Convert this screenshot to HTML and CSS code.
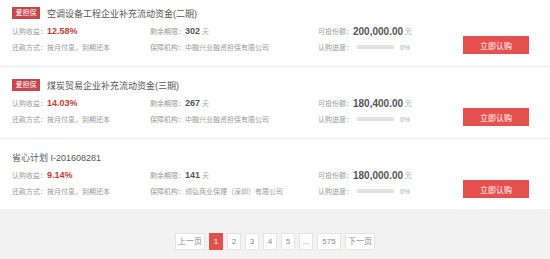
FILE: index.html
```html
<!DOCTYPE html>
<html lang="zh-CN">
<head>
    <meta charset="UTF-8">
    <title>项目列表</title>
    <link rel="stylesheet" href="styles.css">
</head>
<body>
    <div class="list">
        <div class="card">
            <div class="card-main">
                <div class="title-row">
                    <span class="tag">爱担保</span>
                    <span class="title">空调设备工程企业补充流动资金(二期)</span>
                </div>
                <div class="info">
                    <div class="cell">认购收益：<b class="rate">12.58%</b></div>
                    <div class="cell">剩余期限：<b class="num">302</b> <span class="unit">天</span></div>
                    <div class="cell">可投份额：<b class="num big">200,000.00</b> <span class="unit">元</span></div>
                    <div class="cell">还款方式：按月付息，到期还本</div>
                    <div class="cell">保障机构：中融兴业融资担保有限公司</div>
                    <div class="cell">认购进度：<span class="bar"></span><span class="pct">0%</span></div>
                </div>
            </div>
            <button class="buy">立即认购</button>
        </div>

        <div class="card">
            <div class="card-main">
                <div class="title-row">
                    <span class="tag">爱担保</span>
                    <span class="title">煤炭贸易企业补充流动资金(三期)</span>
                </div>
                <div class="info">
                    <div class="cell">认购收益：<b class="rate">14.03%</b></div>
                    <div class="cell">剩余期限：<b class="num">267</b> <span class="unit">天</span></div>
                    <div class="cell">可投份额：<b class="num big">180,400.00</b> <span class="unit">元</span></div>
                    <div class="cell">还款方式：按月付息，到期还本</div>
                    <div class="cell">保障机构：中融兴业融资担保有限公司</div>
                    <div class="cell">认购进度：<span class="bar"></span><span class="pct">0%</span></div>
                </div>
            </div>
            <button class="buy">立即认购</button>
        </div>

        <div class="card">
            <div class="card-main">
                <div class="title-row">
                    <span class="title">省心计划 I-201608281</span>
                </div>
                <div class="info">
                    <div class="cell">认购收益：<b class="rate">9.14%</b></div>
                    <div class="cell">剩余期限：<b class="num">141</b> <span class="unit">天</span></div>
                    <div class="cell">可投份额：<b class="num big">180,000.00</b> <span class="unit">元</span></div>
                    <div class="cell">还款方式：按月付息，到期还本</div>
                    <div class="cell">保障机构：领弘商业保理（深圳）有限公司</div>
                    <div class="cell">认购进度：<span class="bar"></span><span class="pct">0%</span></div>
                </div>
            </div>
            <button class="buy">立即认购</button>
        </div>
    </div>

    <div class="pager">
        <a class="page wide">上一页</a>
        <a class="page active">1</a>
        <a class="page">2</a>
        <a class="page">3</a>
        <a class="page">4</a>
        <a class="page">5</a>
        <a class="page">...</a>
        <a class="page mid">575</a>
        <a class="page wide">下一页</a>
    </div>
</body>
</html>
```

FILE: styles.css
```css
body {
    margin: 0;
    font-family: "Liberation Sans", "Noto Sans CJK SC", sans-serif;
    background: #f2f2f2;
    color: #888;
    font-size: 7px;
}
.list {
    margin-top: -4px;
    display: flex;
    flex-direction: column;
    gap: 3px;
    background: #f3f3f3;
}
.card {
    display: flex;
    height: 69px;
    box-sizing: border-box;
    padding: 11px 21px 0 12px;
    background: #fff;
}
.card-main {
    flex: 1;
}
.title-row {
    display: flex;
    align-items: center;
    height: 12px;
    gap: 7px;
}
.tag {
    background: #c9474a;
    color: #fff;
    font-size: 7px;
    line-height: 12px;
    padding: 0 3px;
    width: 22px;
    text-align: center;
}
.title {
    font-size: 9px;
    color: #555;
}
.info {
    display: grid;
    grid-template-columns: 138px 168px 1fr;
    grid-auto-rows: 16px;
    margin-top: 4px;
}
.cell {
    display: flex;
    align-items: center;
    white-space: nowrap;
    color: #999;
}
.rate {
    color: #c43a3a;
    font-size: 9px;
}
.num {
    color: #555;
    font-size: 9px;
}
.num.big {
    font-size: 10px;
}
.unit {
    color: #aaa;
    margin-left: 2px;
}
.bar {
    display: inline-block;
    width: 37px;
    height: 4px;
    background: #e2e2e2;
    margin-left: 4px;
}
.pct {
    margin-left: 6px;
    color: #aaa;
}
.buy {
    margin-top: 29px;
    width: 66px;
    height: 18px;
    border: none;
    background: #e5514f;
    color: #fff;
    font-family: inherit;
    font-size: 8px;
    padding: 0;
}
.pager {
    display: flex;
    justify-content: center;
    gap: 4px;
    padding-top: 24px;
}
.page {
    height: 17px;
    min-width: 14px;
    box-sizing: border-box;
    border: 1px solid #e3e3e3;
    background: #fff;
    color: #888;
    font-size: 8px;
    line-height: 15px;
    text-align: center;
    padding: 0 1px;
}
.page.wide {
    width: 30px;
}
.page.mid {
    width: 24px;
}
.page.active {
    background: #e0504f;
    border-color: #e0504f;
    color: #fff;
}
```
